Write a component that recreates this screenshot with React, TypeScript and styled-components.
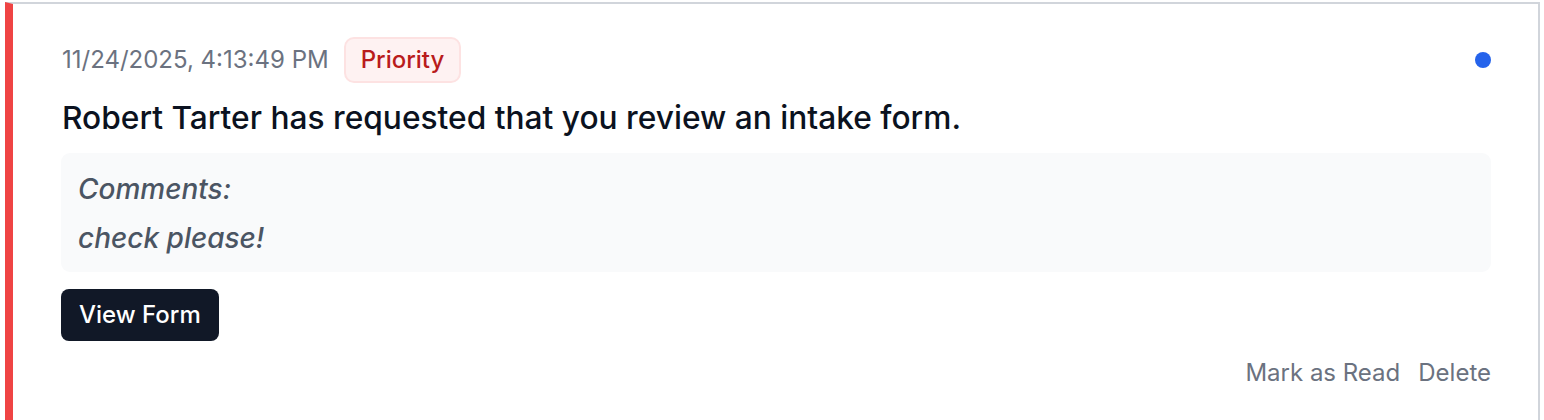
import React from "react";
import styled, { createGlobalStyle } from "styled-components";

const GlobalStyle = createGlobalStyle`
  html, body {
    margin: 0;
    padding: 0;
    background: #ffffff;
    font-family: Inter, "Noto Sans", "Liberation Sans", sans-serif;
  }
  * { box-sizing: border-box; }
`;

const Page = styled.div`
  padding: 2px 4px 0 5px;
`;

const Card = styled.article`
  border: 2px solid #d1d5db;
  border-left: 8px solid #ef4444;
  border-bottom: none;
  background: #ffffff;
  padding: 32px 47px 40px 48px;
  display: flex;
  flex-direction: column;
`;

const Header = styled.div`
  display: flex;
  align-items: center;
  justify-content: space-between;
  height: 47px;
`;

const Meta = styled.div`
  display: flex;
  align-items: center;
  gap: 15px;
`;

const Timestamp = styled.span`
  font-size: 24px;
  line-height: 36px;
  color: #6b7280;
  padding-left: 1px;
`;

const Badge = styled.span`
  display: inline-flex;
  align-items: center;
  font-size: 24px;
  line-height: 36px;
  font-weight: 500;
  color: #b91c1c;
  background: #fef2f2;
  border: 2px solid #fde2e2;
  border-radius: 10px;
  padding: 3px 15px;
`;

const UnreadDot = styled.span`
  width: 16px;
  height: 16px;
  border-radius: 50%;
  background: #2563eb;
`;

const Title = styled.h3`
  margin: 14px 0 0 0;
  padding-left: 1px;
  font-size: 31.7px;
  line-height: 42px;
  font-weight: 500;
  color: #0b1220;
`;

const CommentBox = styled.div`
  margin-top: 14px;
  background: #f9fafb;
  border-radius: 9px;
  padding: 15px 17px 13px;
  display: flex;
  flex-direction: column;
  gap: 7px;
`;

const CommentLine = styled.p`
  margin: 0;
  font-size: 28px;
  line-height: 42px;
  font-style: italic;
  font-weight: 500;
  color: #4b5563;
`;

const Actions = styled.div`
  margin-top: 17px;
  display: flex;
`;

const PrimaryButton = styled.button`
  height: 52px;
  padding: 0 18px;
  border: none;
  border-radius: 8px;
  background: #111827;
  color: #ffffff;
  font-family: inherit;
  font-size: 24px;
  font-weight: 500;
  line-height: 36px;
  cursor: pointer;
`;

const Footer = styled.div`
  margin-top: 14px;
  display: flex;
  justify-content: flex-end;
  gap: 18px;
`;

const LinkButton = styled.button`
  border: none;
  background: none;
  padding: 0;
  font-family: inherit;
  font-size: 24px;
  line-height: 36px;
  color: #6b7280;
  cursor: pointer;
`;

export default function App() {
  return (
    <>
      <GlobalStyle />
      <Page>
        <Card>
          <Header>
            <Meta>
              <Timestamp>11/24/2025, 4:13:49 PM</Timestamp>
              <Badge>Priority</Badge>
            </Meta>
            <UnreadDot />
          </Header>
          <Title>Robert Tarter has requested that you review an intake form.</Title>
          <CommentBox>
            <CommentLine>Comments:</CommentLine>
            <CommentLine>check please!</CommentLine>
          </CommentBox>
          <Actions>
            <PrimaryButton>View Form</PrimaryButton>
          </Actions>
          <Footer>
            <LinkButton>Mark as Read</LinkButton>
            <LinkButton>Delete</LinkButton>
          </Footer>
        </Card>
      </Page>
    </>
  );
}
